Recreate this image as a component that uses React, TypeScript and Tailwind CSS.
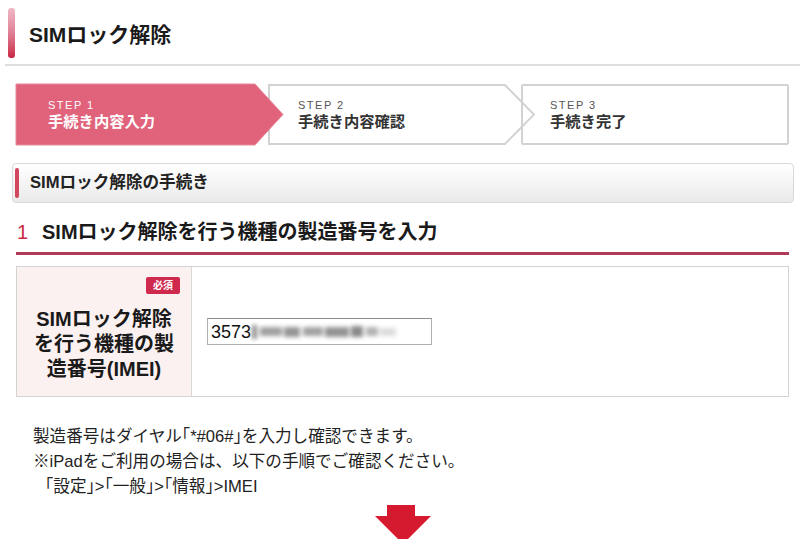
import React from "react";

const font = "font-['Liberation_Sans','Noto_Sans_CJK_JP',sans-serif]";

function Step({
  label,
  name,
  active,
  arrow,
  widthClass,
  textPad,
}: {
  label: string;
  name: string;
  active?: boolean;
  arrow: boolean;
  widthClass: string;
  textPad: string;
}) {
  return (
    <div className={`relative h-[61px] shrink-0 ${widthClass} ${active ? "z-10" : ""} ${!arrow ? "border-2 border-[#d2d2d2] rounded-[2px]" : ""}`}>
      {arrow && (
        <svg className="absolute left-0 top-0 overflow-visible" width="267" height="61" viewBox="0 0 267 61">
          {active ? (
            <polygon points="0,0 239,0 267,30.5 239,61 0,61" fill="#e0637b" stroke="#e88a9b" strokeWidth="1" />
          ) : (
            <polygon points="1,1 237,1 266,30.5 237,60 1,60" fill="#ffffff" stroke="#d2d2d2" strokeWidth="2" />
          )}
        </svg>
      )}
      <div className={`relative flex flex-col ${textPad} ${arrow ? "pt-[14px]" : "pt-[12px]"}`}>
        <span className={`text-[11px] leading-[14px] tracking-[1.5px] ${active ? "text-white" : "text-[#555]"}`}>{label}</span>
        <span className={`text-[15.3px] leading-[20px] font-bold ${active ? "text-white" : "text-[#333]"}`}>{name}</span>
      </div>
    </div>
  );
}

export default function App() {
  return (
    <div className={`w-[800px] h-[539px] overflow-hidden bg-white text-[#222] ${font}`}>
      {/* Title */}
      <div className="ml-[5px] h-[66px] border-b-2 border-[#dedede] flex items-start pt-[8px]">
        <div className="ml-[3px] w-[7px] h-[50px] rounded-[3px] bg-linear-to-b from-[#efb8c4] via-[#e07f96] to-[#c81f45]" />
        <h1 className="ml-[14px] mt-[13px] text-[21px] leading-[28px] font-bold text-[#1a1a1a]">SIMロック解除</h1>
      </div>

      {/* Steps */}
      <div className="mt-[18px] ml-[16px] flex">
        <Step label="STEP 1" name="手続き内容入力" active arrow widthClass="w-[252px]" textPad="pl-[32px]" />
        <Step label="STEP 2" name="手続き内容確認" arrow widthClass="w-[253px]" textPad="pl-[30px]" />
        <Step label="STEP 3" name="手続き完了" arrow={false} widthClass="w-[268px]" textPad="pl-[27px]" />
      </div>

      {/* Section header */}
      <div className="mt-[18px] ml-[12px] mr-[6px] h-[40px] rounded-[4px] border border-[#d9d9d9] bg-linear-to-b from-white to-[#eaeaea] flex items-center">
        <div className="ml-[2px] w-[4px] h-[30px] rounded-[2px] bg-[#d2455f]" />
        <span className="ml-[11px] text-[16.6px] font-bold text-[#222]">SIMロック解除の手続き</span>
      </div>

      {/* Heading */}
      <div className="mt-[14px] ml-[16px] mr-[11px] pb-[5px] border-b-[3px] border-[#b03b59] flex items-center h-[38px]">
        <span className="w-[26px] text-[20px] leading-[30px] text-[#cc2a45] pl-[1px]">1</span>
        <span className="text-[20px] leading-[30px] font-bold text-[#1a1a1a]">SIMロック解除を行う機種の製造番号を入力</span>
      </div>

      {/* Table */}
      <div className="mt-[11px] ml-[16px] mr-[11px] h-[131px] border border-[#d3d3d3] flex">
        <div className="w-[175px] shrink-0 bg-[#fcf1f1] border-r border-[#d8d8d8] flex flex-col pt-[10px] px-[11px]">
          <div className="flex justify-end">
            <span className="w-[34px] h-[17px] rounded-[2px] bg-[#cf2a4e] text-white text-[10px] font-bold flex items-center justify-center leading-none">必須</span>
          </div>
          <div className="mt-[13px] text-center text-[20px] leading-[25px] font-bold text-[#1a1a1a] whitespace-nowrap">
            SIMロック解除
            <br />
            を行う機種の製
            <br />
            造番号(IMEI)
          </div>
        </div>
        <div className="flex-1 flex items-center pl-[15px]">
          <div className="w-[225px] h-[27px] border border-[#b0b0b0] border-t-[#8c8c8c] flex items-center pl-[3px] overflow-hidden">
            <span className="text-[18px] leading-none text-[#111]">3573</span>
            <div className="flex items-center blur-[2px] ml-[1px]">
              <div className="w-[5px] h-[14px] bg-[#8f8f8f]" />
              <div className="w-[22px] h-[9px] bg-[#a0a0a0] ml-[3px]" />
              <div className="w-[16px] h-[10px] bg-[#959595] ml-[2px]" />
              <div className="w-[20px] h-[9px] bg-[#a2a2a2] ml-[3px]" />
              <div className="w-[24px] h-[10px] bg-[#939393] ml-[2px]" />
              <div className="w-[12px] h-[11px] bg-[#8a8a8a] ml-[2px]" />
              <div className="w-[12px] h-[9px] bg-[#b2b2b2] ml-[3px]" />
              <div className="w-[16px] h-[8px] bg-[#dcdcdc] ml-[2px]" />
            </div>
          </div>
        </div>
      </div>

      {/* Description */}
      <div className="mt-[27px] pl-[33px] text-[16.6px] leading-[25px] text-[#222]">
        <p>製造番号はダイヤル｢*#06#｣を入力し確認できます。</p>
        <p>※iPadをご利用の場合は、以下の手順でご確認ください。</p>
        <p className="pl-[12px]">｢設定｣&gt;｢一般｣&gt;｢情報｣&gt;IMEI</p>
      </div>

      {/* Down arrow */}
      <div className="ml-[16px] mr-[11px] mt-[6px] flex justify-center">
        <svg width="56" height="40" viewBox="0 0 56 40">
          <rect x="12" y="0" width="28" height="12" fill="#d5192f" />
          <polygon points="0,11 56,11 28,39" fill="#d5192f" />
        </svg>
      </div>
    </div>
  );
}
